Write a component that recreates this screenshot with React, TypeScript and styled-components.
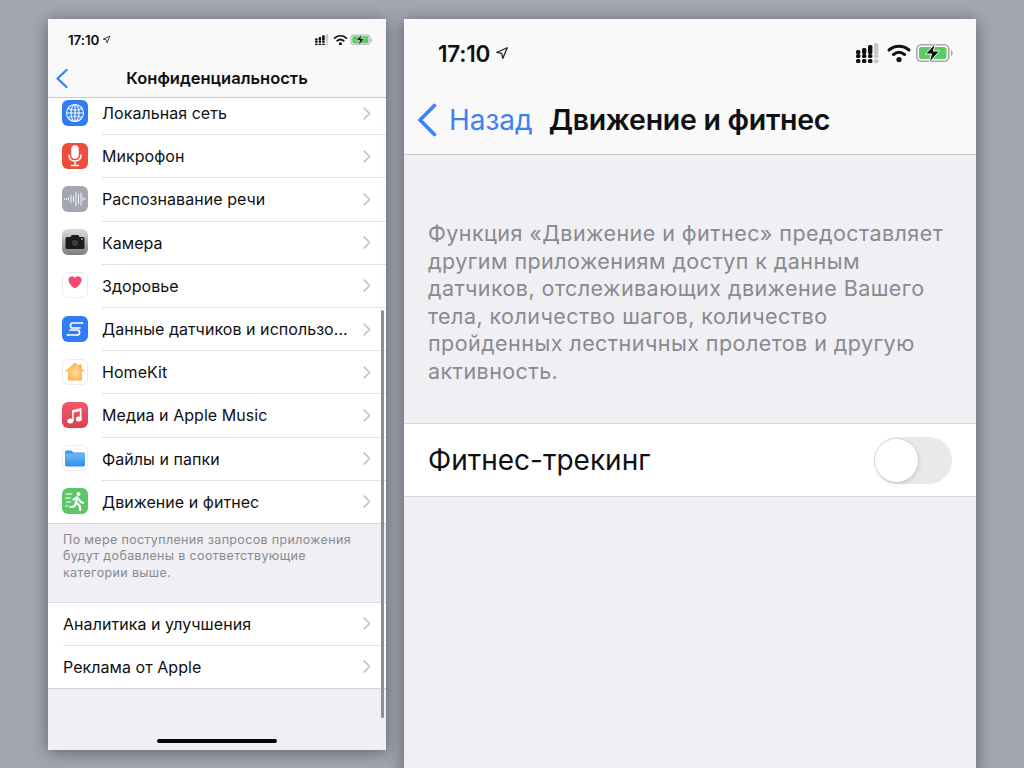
import React from "react";
import styled, { createGlobalStyle } from "styled-components";

const GlobalStyle = createGlobalStyle`
  html, body {
    margin: 0;
    height: 100%;
    overflow: hidden;
    background: #a3a7b2;
  }
  * {
    box-sizing: border-box;
  }
`;

const Stage = styled.div`
  width: 1024px;
  height: 768px;
  overflow: hidden;
  display: flex;
  align-items: flex-start;
  gap: 18px;
  padding: 19px 0 0 48px;
  background: #a3a7b2;
  font-family: Inter, "Noto Sans", sans-serif;
  color: #101012;
`;

const Phone = styled.div<{ $width: number; $height: number }>`
  position: relative;
  flex: none;
  width: ${(p) => p.$width}px;
  height: ${(p) => p.$height}px;
  background: #efeff4;
  box-shadow: 0 2px 16px rgba(50, 52, 60, 0.6);
  display: flex;
  flex-direction: column;
  overflow: hidden;
`;

const StatusBar = styled.div<{ $height: number; $pad: number; $right: number }>`
  height: ${(p) => p.$height}px;
  padding: 2px ${(p) => p.$right}px 0 ${(p) => p.$pad}px;
  background: #f9f9f9;
  display: flex;
  align-items: center;
  justify-content: space-between;
`;

const Clock = styled.div<{ $size: number; $gap: number }>`
  display: flex;
  align-items: center;
  gap: ${(p) => p.$gap}px;
  font-size: ${(p) => p.$size}px;
  font-weight: 600;
  letter-spacing: -0.01em;
`;

const NavBar = styled.div<{ $height: number }>`
  position: relative;
  height: ${(p) => p.$height}px;
  background: #f9f9f9;
  border-bottom: 1px solid #c9c9cc;
  display: flex;
  align-items: center;
  flex: none;
`;

const SmallTitle = styled.div`
  flex: 1;
  text-align: center;
  font-size: 16.5px;
  font-weight: 600;
`;

const BackMark = styled.svg`
  position: absolute;
  left: 7px;
  top: 10px;
`;

const BigNav = styled.div`
  display: flex;
  align-items: center;
  padding: 0 0 0 13px;
  font-size: 28px;
`;

const BackLabel = styled.span`
  color: #3c82f6;
  margin-left: 12px;
`;

const BigTitle = styled.span`
  font-weight: 600;
  margin-left: 16px;
  font-size: 28.5px;
  letter-spacing: -0.01em;
`;

const Scroller = styled.div`
  flex: 1;
  overflow: hidden;
`;

const Group = styled.div<{ $offset?: number; $top?: boolean }>`
  background: #fff;
  margin-top: ${(p) => p.$offset ?? 0}px;
  box-shadow: ${(p) => (p.$top ? "inset 0 1px 0 #dcdce0" : "none")};
  border-bottom: 1px solid #d4d4d8;
`;

const Row = styled.div<{ $height: number }>`
  height: ${(p) => p.$height}px;
  display: flex;
  align-items: center;
  padding-left: 14px;
  & + & > div:last-child {
    box-shadow: inset 0 1px 0 #e2e2e5;
  }
`;

const IconBox = styled.div<{ $bg: string; $line?: boolean }>`
  width: 26px;
  height: 26px;
  flex: none;
  margin-right: 14px;
  border-radius: 6px;
  overflow: hidden;
  background: ${(p) => p.$bg};
  border: ${(p) => (p.$line ? "1px solid #ececee" : "none")};
  display: flex;
  align-items: center;
  justify-content: center;
`;

const RowBody = styled.div`
  flex: 1;
  height: 100%;
  display: flex;
  align-items: center;
  justify-content: space-between;
  padding: 1px 15px 0 0;
  font-size: 16px;
  letter-spacing: 0.05px;
  white-space: nowrap;
`;

const PlainBody = styled(RowBody)`
  margin-left: 1px;
`;

const Note = styled.div`
  height: 78px;
  padding: 8px 20px 0 15px;
  font-size: 12.5px;
  letter-spacing: 0.35px;
  line-height: 16.5px;
  color: #8a8a8e;
`;

const ScrollThumb = styled.div`
  position: absolute;
  right: 2px;
  top: 291px;
  width: 3px;
  height: 408px;
  border-radius: 2px;
  background: #8f8f94;
`;

const HomeBar = styled.div`
  position: absolute;
  left: 109px;
  bottom: 7px;
  width: 120px;
  height: 4px;
  border-radius: 2px;
  background: #050505;
`;

const Description = styled.p`
  margin: 0;
  padding: 65px 20px 0 24px;
  height: 268px;
  font-size: 21.5px;
  letter-spacing: 0.44px;
  line-height: 27.5px;
  color: #8a8a8e;
`;

const ToggleRow = styled.div`
  height: 74px;
  background: #fff;
  border-top: 1px solid #d8d8dc;
  border-bottom: 1px solid #d8d8dc;
  display: flex;
  align-items: center;
  justify-content: space-between;
  padding: 0 24px;
  font-size: 28px;
`;

const Track = styled.div`
  position: relative;
  width: 78px;
  height: 47px;
  border-radius: 24px;
  background: #e9e9ea;
`;

const Knob = styled.div`
  position: absolute;
  left: 1px;
  top: 2px;
  width: 43px;
  height: 43px;
  border-radius: 50%;
  background: #fff;
  box-shadow: 1px 2px 5px rgba(0, 0, 0, 0.12), 0 0 0 1px rgba(0, 0, 0, 0.04);
`;

const HeartBox = styled.svg`
  align-self: flex-start;
`;

const Chevron = () => (
  <svg width="8" height="13" viewBox="0 0 8 13" fill="none">
    <path d="M1.2 1.2 6.6 6.5 1.2 11.8" stroke="#c4c4c8" strokeWidth="1.7" strokeLinecap="round" strokeLinejoin="round" />
  </svg>
);

const Arrow = ({ size }: { size: number }) => (
  <svg width={size} height={size} viewBox="0 0 16 16" fill="none">
    <path d="M14 2 2 7.4l5.6 1.1L9 14z" stroke="#222" strokeWidth="1.5" strokeLinejoin="round" />
  </svg>
);

const StatusIcons = ({ width }: { width: number }) => (
  <svg width={width} height={(width * 20) / 98} viewBox="0 0 98 20" fill="none">
    <g fill="#111">
      {[0, 1, 2].map((c) => [12, 17].map((y) => <rect key={`${c}-${y}`} x={c * 6} y={y - 1} width="4.4" height="4" rx="1.5" />))}
      <rect x="0" y="7" width="4.4" height="4" rx="1.5" />
      <rect x="6" y="5" width="4.4" height="6" rx="1.5" />
      <rect x="12" y="2" width="4.4" height="9" rx="1.5" />
    </g>
    <g fill="#c9c9cb">
      <rect x="18" y="0" width="4.4" height="11" rx="1.5" />
      <rect x="18" y="11" width="4.4" height="4" rx="1.5" />
      <rect x="18" y="16" width="4.4" height="4" rx="1.5" />
    </g>
    <g stroke="#111" strokeWidth="3" strokeLinecap="round">
      <path d="M33 7c6-5 14-5 20 0" />
      <path d="M37.5 11.5c3.5-2.8 7.5-2.8 11 0" />
    </g>
    <circle cx="43" cy="16.5" r="2.6" fill="#111" />
    <rect x="60.8" y="1.8" width="32" height="16.4" rx="4.5" stroke="#a9a9ac" strokeWidth="1.6" />
    <rect x="63" y="4" width="27.5" height="12" rx="2.5" fill="#5ccb64" />
    <path d="M95 7c2 .5 2.5 5.5 0 6z" fill="#a9a9ac" />
    <path d="M79.5 0 69.5 11h6l-2.5 9 10.5-12h-6.2z" fill="#111" stroke="#f9f9f9" strokeWidth="1" />
  </svg>
);

const GlobeIcon = () => (
  <svg width="20" height="20" viewBox="0 0 20 20" fill="none" stroke="#fff" strokeWidth="1.1">
    <circle cx="10" cy="10" r="8.5" />
    <ellipse cx="10" cy="10" rx="4" ry="8.5" />
    <path d="M10 1.5v17M1.5 10h17M3 5.5c4 2 10 2 14 0M3 14.5c4-2 10-2 14 0" />
  </svg>
);

const MicIcon = () => (
  <svg width="18" height="22" viewBox="0 0 18 22" fill="none" stroke="#fff" strokeWidth="1.5" strokeLinecap="round">
    <rect x="6" y="1" width="6" height="12" rx="3" fill="#fff" />
    <path d="M3 10c0 4 2.5 6 6 6s6-2 6-6M9 16v4M5.5 20.5h7" />
  </svg>
);

const WaveIcon = () => (
  <svg width="24" height="16" viewBox="0 0 24 16" stroke="#fff" strokeWidth="0.9" strokeLinecap="round">
    {[[1.5, 0.4], [3.5, 0.6], [5.5, 1], [8, 4], [10.5, 2.5], [13, 7], [15.5, 4.5], [18, 6], [20, 1.5], [22, 0.5]].map(([x, h]) => (
      <line key={x} x1={x} x2={x} y1={8 - h} y2={8 + h} />
    ))}
  </svg>
);

const CameraIcon = () => (
  <svg width="20" height="16" viewBox="0 0 20 16">
    <path d="M2 3h3.5l1.300-2h6.400l1.300 2H18a1.500 1.500 0 0 1 1.500 1.500v9A1.500 1.500 0 0 1 18 15H2a1.500 1.500 0 0 1-1.500-1.500v-9A1.500 1.500 0 0 1 2 3z" fill="#1c1c1e" />
    <circle cx="10" cy="9" r="4" fill="#3a3a3c" stroke="#111" />
    <circle cx="17" cy="5" r=".9" fill="#e8b23c" />
  </svg>
);

const HeartIcon = () => (
  <HeartBox width="24" height="24" viewBox="0 0 24 24">
    <path d="M12 15.5s-6.500-4-6.500-8.500A3.500 3.500 0 0 1 12 5a3.500 3.500 0 0 1 6.500 2c0 4.500-6.500 8.500-6.500 8.500z" fill="#f4466e" />
  </HeartBox>
);

const SensorIcon = () => (
  <svg width="22" height="22" viewBox="0 0 22 22" fill="none" stroke="#fff" strokeWidth="1.7" strokeLinecap="round">
    <path d="M18 5H9c-3.500 0-3.500 5 0 5h7" />
    <path d="M4 17h9c3.500 0 3.500-5 0-5H6" />
    <circle cx="18.300" cy="5" r="1" fill="#fff" stroke="none" />
    <circle cx="3.700" cy="17" r="1" fill="#fff" stroke="none" />
  </svg>
);

const HomeIcon = () => (
  <svg width="22" height="22" viewBox="0 0 22 22">
    <defs>
      <radialGradient id="home" cx="0.5" cy="0.55" r="0.6">
        <stop offset="0" stopColor="#fddc9c" />
        <stop offset="0.6" stopColor="#fcc062" />
        <stop offset="1" stopColor="#f8a02c" />
      </radialGradient>
    </defs>
    <path d="M15 3.500h2.500v5L15 6.500z" fill="#f8a636" />
    <path d="M11 1.500 20.500 10l-.8.900-1.700-1.400V18a1.500 1.500 0 0 1-1.500 1.500H5.500A1.500 1.500 0 0 1 4 18V9.500l-1.700 1.400-.8-.9z" fill="url(#home)" />
  </svg>
);

const MusicIcon = () => (
  <svg width="18" height="18" viewBox="0 0 18 18" fill="#fff">
    <path d="M6 4.200 15.500 2v11h-1.700V5.200L7.700 6.600V15H6z" />
    <ellipse cx="4.300" cy="15" rx="3" ry="2.500" />
    <ellipse cx="12.800" cy="13" rx="3" ry="2.500" />
  </svg>
);

const FolderIcon = () => (
  <svg width="22" height="18" viewBox="0 0 22 18">
    <defs>
      <linearGradient id="folder" x1="0" y1="0" x2="0" y2="1">
        <stop offset="0" stopColor="#6fb8f8" />
        <stop offset="1" stopColor="#2f8ff0" />
      </linearGradient>
    </defs>
    <path d="M1 3a1.500 1.500 0 0 1 1.500-1.500h5L9.500 3.500h10A1.500 1.500 0 0 1 21 5v3H1z" fill="#3c95ee" />
    <rect x="1" y="4.500" width="20" height="13" rx="1.500" fill="url(#folder)" />
  </svg>
);

const RunnerIcon = () => (
  <svg width="24" height="24" viewBox="0 0 24 24" fill="none" stroke="#fff" strokeWidth="2.2" strokeLinecap="round" strokeLinejoin="round">
    <circle cx="15.500" cy="5" r="2" fill="#fff" stroke="none" />
    <path d="M10.500 10.500 14 8.500l2.500 2.500 1 2 2.500.8" />
    <path d="M14 8.500l-1 5.500 3.500 2.500.8 4.500M13 14l-2 3.500-3.500.5" />
    <path d="M3 5h6M2.500 9h5M3.500 13h4M2.500 17h2.500" strokeWidth="1.2" />
  </svg>
);

const privacyRows = [
  { label: "Локальная сеть", bg: "#2f7cf6", icon: <GlobeIcon /> },
  { label: "Микрофон", bg: "#ee4c3c", icon: <MicIcon /> },
  { label: "Распознавание речи", bg: "#a4a7b2", icon: <WaveIcon /> },
  { label: "Камера", bg: "linear-gradient(#dcdcde, #7c7c80)", icon: <CameraIcon /> },
  { label: "Здоровье", bg: "#fff", icon: <HeartIcon />, line: true },
  { label: "Данные датчиков и использо...", bg: "#2f7cf6", icon: <SensorIcon /> },
  { label: "HomeKit", bg: "#fff", icon: <HomeIcon />, line: true },
  { label: "Медиа и Apple Music", bg: "linear-gradient(#f2596a, #dc3f50)", icon: <MusicIcon /> },
  { label: "Файлы и папки", bg: "#fff", icon: <FolderIcon />, line: true },
  { label: "Движение и фитнес", bg: "#5cc769", icon: <RunnerIcon /> },
];

const App: React.FunctionComponent = () => {
  return (
    <Stage>
      <GlobalStyle />
      <Phone $width={338} $height={731}>
        <StatusBar $height={39} $pad={20} $right={13}>
          <Clock $size={13.5} $gap={3}>
            17:10 <Arrow size={9} />
          </Clock>
          <StatusIcons width={58} />
        </StatusBar>
        <NavBar $height={40}>
          <BackMark width="14" height="21" viewBox="0 0 14 21" fill="none">
            <path d="M11.5 2 2.5 10.5l9 8.500" stroke="#3c82f6" strokeWidth="2.4" strokeLinecap="round" strokeLinejoin="round" />
          </BackMark>
          <SmallTitle>Конфиденциальность</SmallTitle>
        </NavBar>
        <Scroller>
          <Group $offset={-7}>
            {privacyRows.map((row) => (
              <Row key={row.label} $height={43.2}>
                <IconBox $bg={row.bg} $line={row.line}>
                  {row.icon}
                </IconBox>
                <RowBody>
                  {row.label}
                  <Chevron />
                </RowBody>
              </Row>
            ))}
          </Group>
          <Note>
            По мере поступления запросов приложения будут добавлены в соответствующие категории выше.
          </Note>
          <Group $top>
            <Row $height={43}>
              <PlainBody>
                Аналитика и улучшения
                <Chevron />
              </PlainBody>
            </Row>
            <Row $height={43}>
              <PlainBody>
                Реклама от Apple
                <Chevron />
              </PlainBody>
            </Row>
          </Group>
        </Scroller>
        <ScrollThumb />
        <HomeBar />
      </Phone>
      <Phone $width={572} $height={760}>
        <StatusBar $height={66} $pad={34} $right={22}>
          <Clock $size={22.5} $gap={5}>
            17:10 <Arrow size={14} />
          </Clock>
          <StatusIcons width={98} />
        </StatusBar>
        <NavBar $height={70}>
          <BigNav>
            <svg width="20" height="34" viewBox="0 0 20 34" fill="none">
              <path d="M17.5 2.5 3 17l14.5 14.5" stroke="#3c82f6" strokeWidth="3.6" strokeLinecap="round" strokeLinejoin="round" />
            </svg>
            <BackLabel>Назад</BackLabel>
            <BigTitle>Движение и фитнес</BigTitle>
          </BigNav>
        </NavBar>
        <Description>
          Функция «Движение и фитнес» предоставляет другим приложениям доступ к данным датчиков, отслеживающих движение Вашего тела, количество шагов, количество пройденных лестничных пролетов и другую активность.
        </Description>
        <ToggleRow>
          Фитнес-трекинг
          <Track>
            <Knob />
          </Track>
        </ToggleRow>
      </Phone>
    </Stage>
  );
};

export default App;
